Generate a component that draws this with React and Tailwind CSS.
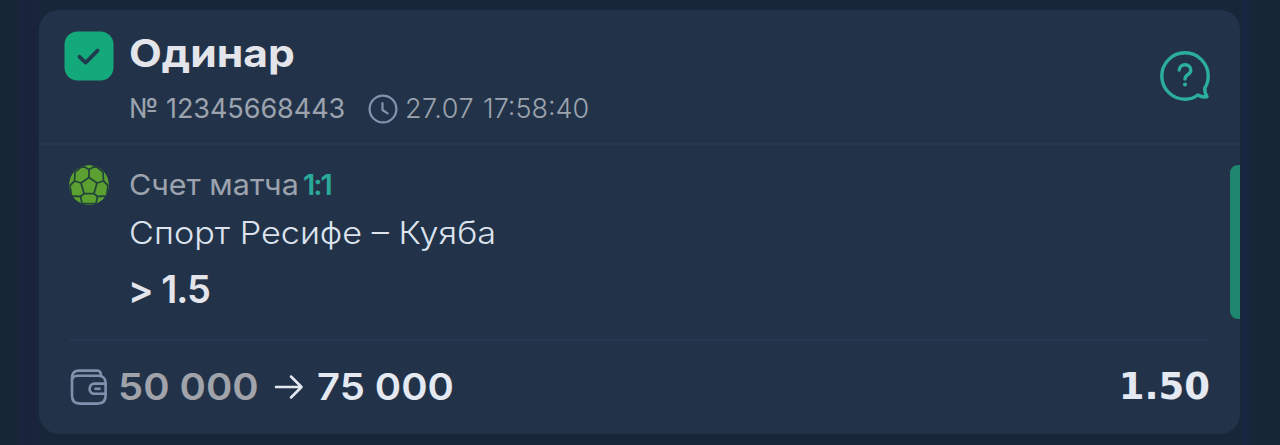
import React from 'react';

const SuccessIcon = () => (
  <svg viewBox="0 0 50 50" className="w-[50px] h-[50px] shrink-0" fill="none">
    <rect x="0.5" y="0.5" width="49" height="49" rx="13" fill="#14a97a" />
    <path d="M15.5 25.8 L21.6 31.6 L33.6 19.6" stroke="#1f3d4c" strokeWidth="3.8" strokeLinecap="round" strokeLinejoin="round" />
  </svg>
);

const ClockIcon = () => (
  <svg viewBox="0 0 30 30" className="w-[30px] h-[30px] shrink-0" fill="none" stroke="#8493ad" strokeWidth="2.2" strokeLinecap="round" strokeLinejoin="round">
    <circle cx="15" cy="15" r="13.4" />
    <path d="M14.5 9 V16 L19.6 19.4" />
  </svg>
);

const HelpIcon = () => (
  <svg viewBox="0 0 52 52" className="w-[52px] h-[52px] shrink-0" fill="none" stroke="#2cae9f" strokeWidth="3.4" strokeLinecap="round" strokeLinejoin="round">
    <path d="M45.8 38 C48.1 34.6 49.2 30.6 49.2 26 A23.2 23.2 0 1 0 26 49.2 C31 49.2 35.2 47.8 38.8 45 C41.4 46.6 44.6 47.2 48 46.8 C46.4 44.4 45.6 41.4 45.8 38 Z" />
    <path d="M20.2 20 C20.4 16.8 22.8 14.8 26 14.8 C29.4 14.8 31.8 17 31.8 20.2 C31.8 24.8 26 24.6 26 29" />
    <circle cx="26" cy="34.6" r="2" fill="#2cae9f" stroke="none" />
  </svg>
);

const BallIcon = () => (
  <svg viewBox="0 0 40 40" className="w-10 h-10 shrink-0">
    <defs>
      <clipPath id="ball">
        <circle cx="20" cy="20" r="20" />
      </clipPath>
    </defs>
    <g clipPath="url(#ball)">
      <circle cx="20" cy="20" r="20" fill="#5da032" />
      <g fill="none" stroke="#22453a" strokeWidth="1.8" strokeLinejoin="round">
        <path d="M20 12.6 L28 18 L25 28.6 H15 L12 18 Z" />
        <path d="M20 12.6 V4.5 M28 18 L34.5 16 M25 28.6 L28.5 31.5 M15 28.6 L11.5 31.5 M12 18 L5.5 16" />
        <path d="M20 4.5 L13.5 1 L6 7 L5.5 16 L1 20.5 L2.5 31 L11.5 31.5 L13 38.6 H27 L28.5 31.5 L37.5 31 L39 20.5 L34.5 16 L34 7 L26.5 1 Z" />
      </g>
    </g>
  </svg>
);

const WalletIcon = () => (
  <svg viewBox="0 0 38 38" className="w-[38px] h-[38px] shrink-0" fill="none" stroke="#8091ad" strokeWidth="2.6" strokeLinecap="round" strokeLinejoin="round">
    <path d="M3 11 V27.5 C3 33 5.5 35.6 11 35.6 H28.5 C34 35.6 36.6 33 36.6 27.5 V15.5 C36.6 10.5 34.2 7.8 29.5 7.8 H8.5 C5.2 7.8 3 9.5 3 13" />
    <path d="M3 11 C3 5.3 5 2.6 9.5 2.6 H28.5 C31 2.6 32 4 32 7.8" />
    <path d="M36.6 15.6 H25.5 C22.5 15.6 20.6 17.8 20.6 20.7 C20.6 23.6 22.5 25.8 25.5 25.8 H36.6 M26.5 20.7 H30.5" />
  </svg>
);

const ArrowIcon = () => (
  <svg viewBox="0 0 30 26" className="w-[30px] h-[26px] shrink-0" fill="none" stroke="#e4e9f2" strokeWidth="2.5" strokeLinecap="round" strokeLinejoin="round">
    <path d="M2 13 H27.5 M17 2.5 L27.5 13 L17 23.5" />
  </svg>
);

export default function App() {
  return (
    <div className="h-[445px] w-full bg-[#172635] bg-[linear-gradient(90deg,#172635_14px,#19243c_20px,#19243c_36px,#172638_40px,#172638_1240px,#182642_1244px,#172635_1256px)] pt-2.5 pl-[39px] pr-10 font-['Inter',sans-serif] whitespace-nowrap">
      <div className="h-[424px] rounded-[20px] bg-[#223349] overflow-hidden">
        {/* Header */}
        <div className="flex h-[135px] justify-between border-b-2 border-[#26384b] pl-[25px] pr-[29px]">
          <div className="flex gap-[15px] pt-[21px]">
            <SuccessIcon />
            <div>
              <div className="h-11 w-36 origin-left scale-x-[1.12] text-[38px] leading-[44px] font-bold text-[#e4e5ea]">Одинар</div>
              <div className="mt-[17px] flex h-[34px] items-center text-[27px] leading-[34px] text-[#9ca3ae]">
                <span className="w-[239px] tracking-[-0.05px]">№ 12345668443</span>
                <ClockIcon />
                <span className="ml-[7px] w-[78px] font-[350] tracking-[0.5px]">27.07</span>
                <span className="font-[350]">17:58:40</span>
              </div>
            </div>
          </div>
          <div className="pt-10">
            <HelpIcon />
          </div>
        </div>

        {/* Match */}
        <div className="flex justify-between pt-5">
          <div className="flex gap-5 pl-[30px]">
            <BallIcon />
            <div>
              <div className="flex h-10 items-center text-[29px]">
                <span className="w-[174px] origin-left scale-x-105 text-[#9ca3ae]">Счет матча</span>
                <span className="font-semibold tracking-[-2px] text-[#2aa99a]">1:1</span>
              </div>
              <div className="mt-2 flex h-10 w-[332px] origin-left scale-x-[1.104] items-center text-[31px] font-[330] text-[#dde3ee]">Спорт Ресифе – Куяба</div>
              <div className="mt-4 -ml-px flex h-10 items-center text-[38px] font-semibold tracking-[-1px] text-[#e4e5ea]">&gt; 1.5</div>
            </div>
          </div>
          <div className="h-[154px] w-2.5 rounded-l-lg bg-[#1f866f]" />
        </div>

        {/* Payout */}
        <div className="mt-5 ml-[30px] mr-[30px] flex h-[93px] items-center justify-between border-t-2 border-[#27374f]">
          <div className="flex items-center text-[37px] font-semibold">
            <WalletIcon />
            <span className="ml-[11px] w-[156px] origin-left scale-x-[1.08] text-[#a1a3aa]">50 000</span>
            <ArrowIcon />
            <span className="ml-[13px] origin-left scale-x-[1.08] text-[#e4e9f2]">75 000</span>
          </div>
          <span className="font-['DejaVu_Sans',sans-serif] text-[37px] font-bold text-[#e4e9f2]">1.50</span>
        </div>
      </div>
    </div>
  );
}
